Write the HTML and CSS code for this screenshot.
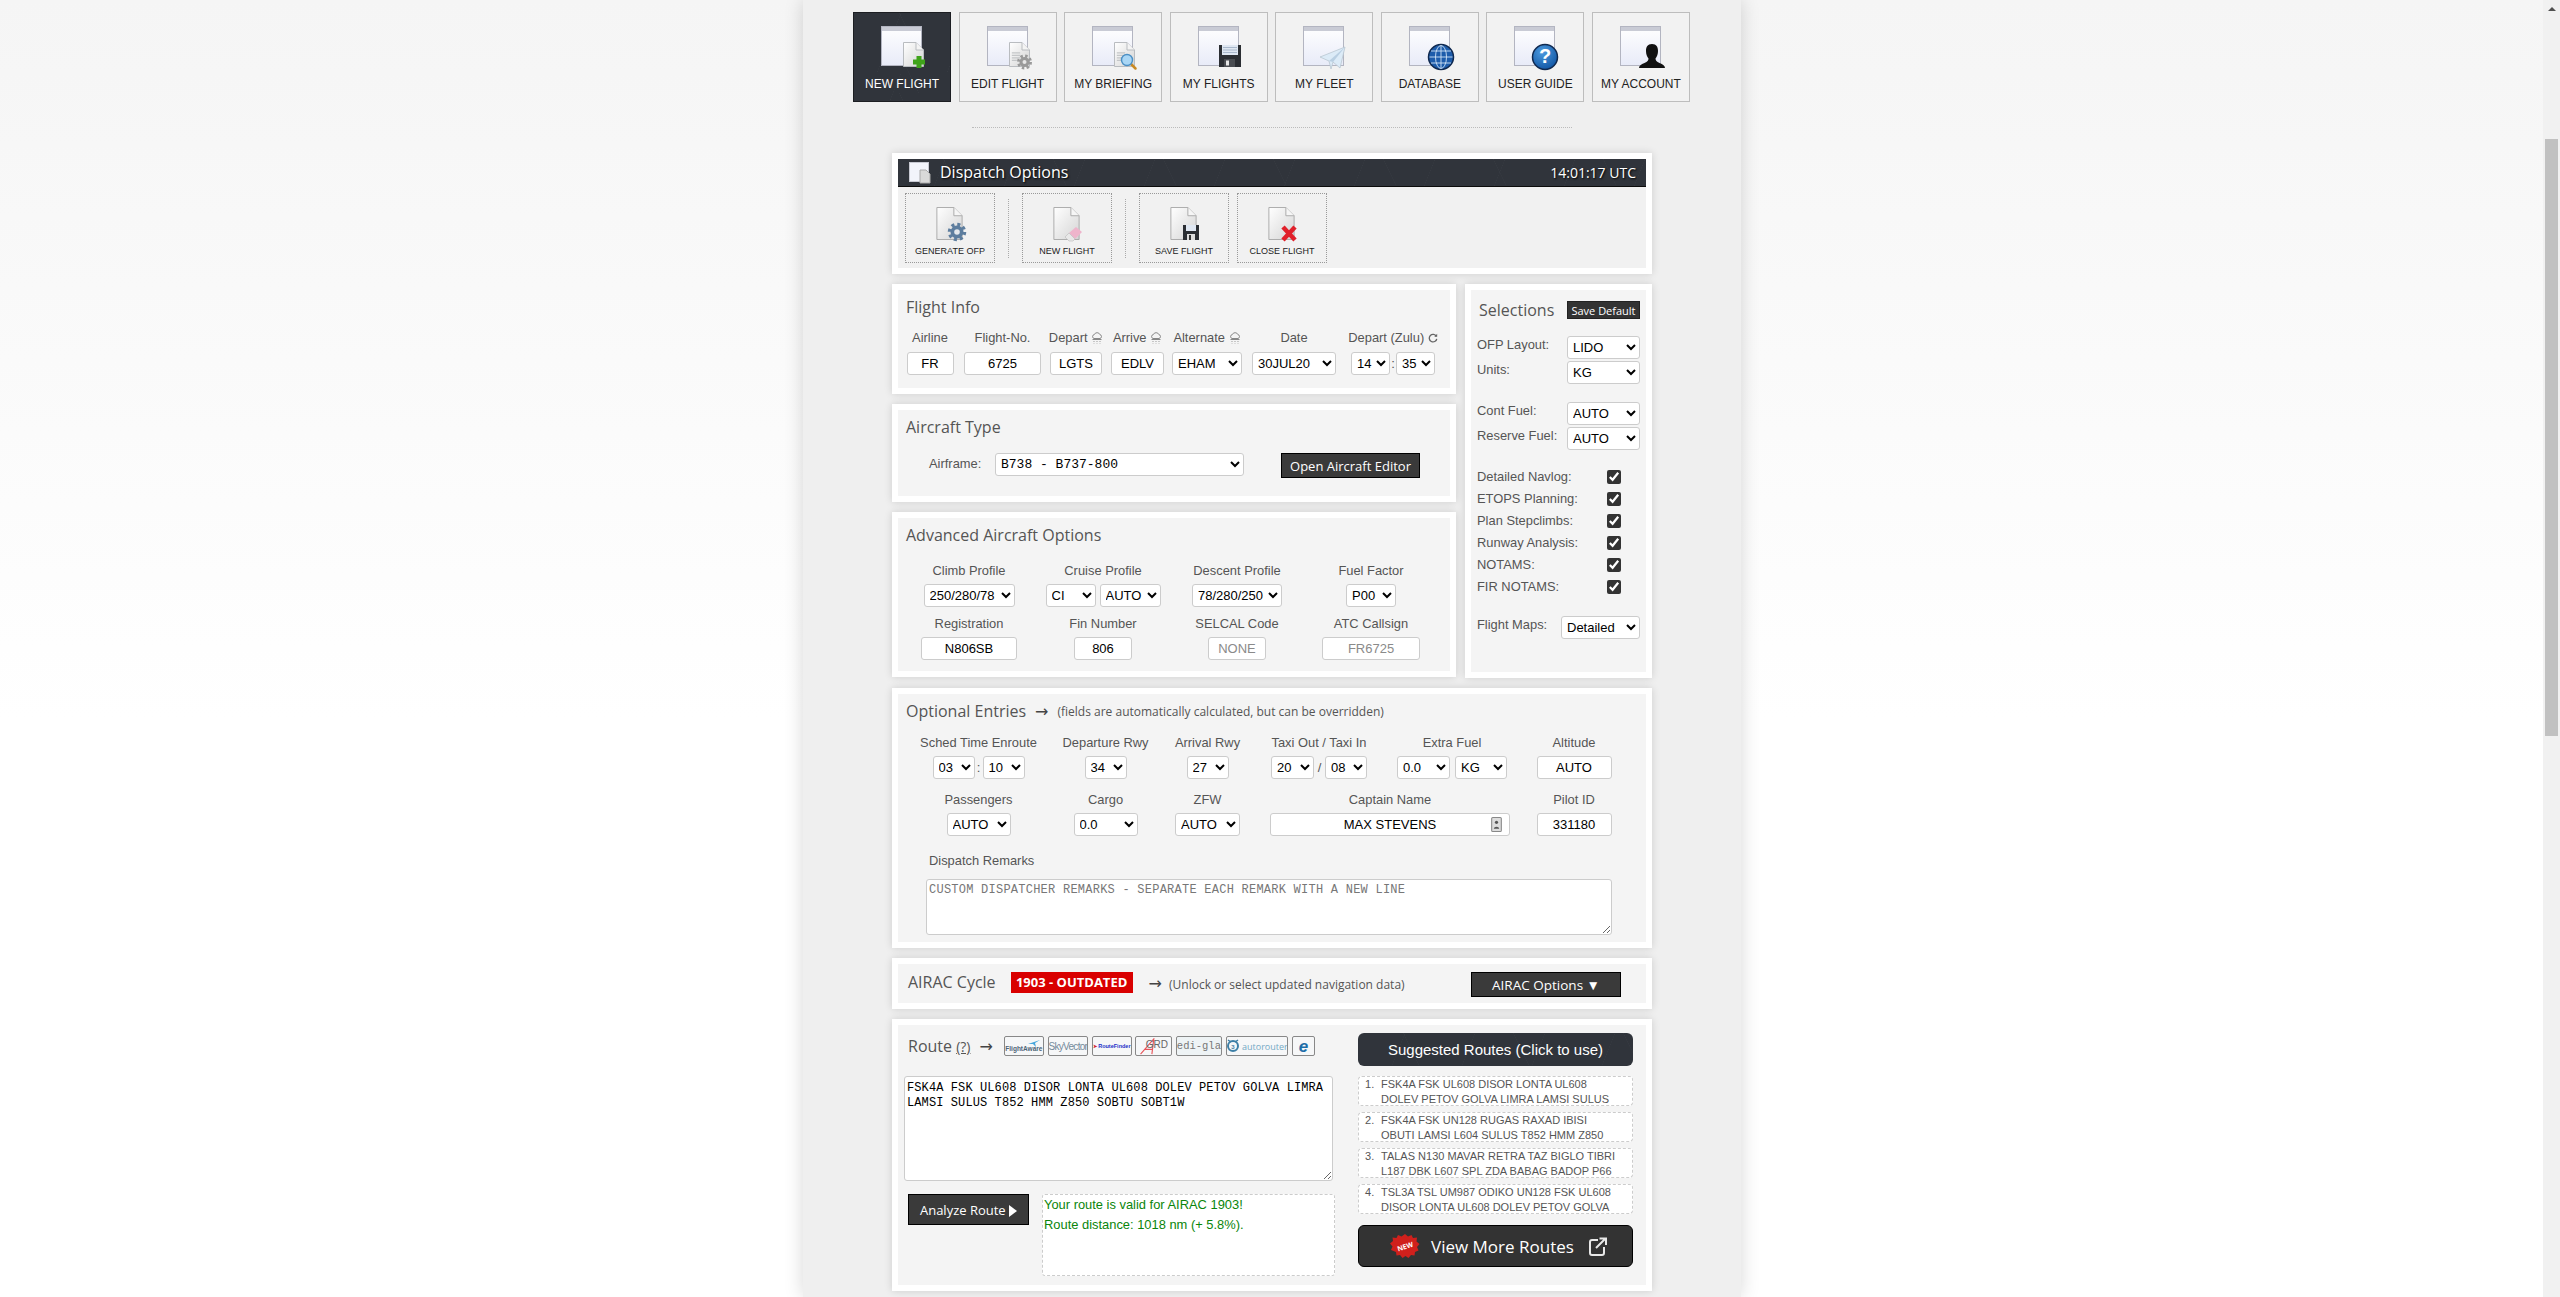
FILE: index.html
```html
<!DOCTYPE html>
<html lang="en">
<head>
<meta charset="utf-8">
<title>Dispatch Options</title>
<link rel="stylesheet" href="styles.css">
</head>
<body>
<svg class="defs" width="0" height="0">
  <defs>
    <linearGradient id="winfill" x1="0" y1="0" x2="0" y2="1"><stop offset="0" stop-color="#fff"/><stop offset="1" stop-color="#e8ebf8"/></linearGradient>
    <linearGradient id="docfill" x1="0" y1="0" x2="1" y2="1"><stop offset="0" stop-color="#fff"/><stop offset="1" stop-color="#d4d4d4"/></linearGradient>
    <radialGradient id="blue" cx=".4" cy=".3" r=".8"><stop offset="0" stop-color="#4d9be0"/><stop offset="1" stop-color="#0b4f9e"/></radialGradient>
    <symbol id="win" viewBox="0 0 41 40">
      <rect x=".5" y=".5" width="40" height="39" fill="url(#winfill)" stroke="#b3b5c1"/>
      <rect x="1" y="1" width="39" height="4" fill="#c9cbd5"/>
    </symbol>
    <symbol id="doc" viewBox="0 0 21 25">
      <path d="M.5.5H13L20.5 8V24.5H.5Z" fill="url(#docfill)" stroke="#b9bcc0"/>
      <path d="M13 .5V8H20.5" fill="#f4f4f4" stroke="#b9bcc0"/>
    </symbol>
    <symbol id="bigdoc" viewBox="0 0 27 34">
      <path d="M.5.5H18L26.5 9V33.5H.5Z" fill="url(#docfill)" stroke="#aaa"/>
      <path d="M18 .5V9H26.5" fill="#f6f6f6" stroke="#aaa"/>
    </symbol>
    <symbol id="lines" viewBox="0 0 12 14">
      <path d="M1 2H11M1 5H11M1 8H11M1 11H7" stroke="#c4c6c8" stroke-width="1.4"/>
    </symbol>
    <symbol id="floppy" viewBox="0 0 24 24">
      <path d="M1 1H23V23H1Z" fill="#2b2e33"/>
      <rect x="4" y="1" width="16" height="10" fill="#dfe7f2"/>
      <path d="M5 3.500H19M5 6H19M5 8.500H19" stroke="#a9b8cc"/>
      <rect x="6" y="15" width="11" height="8" fill="#4a4d52"/>
      <rect x="8" y="16.500" width="3" height="5" fill="#e6e6e6"/>
    </symbol>
    <symbol id="rain" viewBox="0 0 12 12">
      <path d="M3 6.500a2 2 0 0 1 .3-3.900 3 3 0 0 1 5.600 0A2 2 0 0 1 9 6.500Z" fill="none" stroke="#888"/>
      <path d="M1.500 7.500H10.500" stroke="#888"/>
      <path d="M3 9v2.500M6 9v2.500M9 9v2.500" stroke="#999" stroke-dasharray="1 1"/>
    </symbol>
  </defs>
</svg>

<div class="stage">
  <div class="column">
    <nav class="topnav">
      <a class="navbtn active">
        <svg class="navicon" viewBox="0 0 58 48"><use href="#win" x="8" y="2" width="41" height="40"/><use href="#doc" x="30" y="18" width="21" height="25"/><path d="M43.500 32h5v3.500h3.500v5h-3.500v3.500h-5v-3.500H40v-5h3.500z" fill="#3fa31a"/></svg>
        <span>NEW FLIGHT</span>
      </a>
      <a class="navbtn">
        <svg class="navicon" viewBox="0 0 58 48"><use href="#win" x="8" y="2" width="41" height="40"/><use href="#doc" x="30" y="18" width="21" height="25"/><use href="#lines" x="32" y="26" width="10" height="14"/><circle cx="45.500" cy="38" r="5" fill="#9a9a9a"/><circle cx="45.500" cy="38" r="6" fill="none" stroke="#9a9a9a" stroke-width="3" stroke-dasharray="2.400 2.300"/><circle cx="45.500" cy="38" r="2" fill="#e6e6e6"/></svg>
        <span>EDIT FLIGHT</span>
      </a>
      <a class="navbtn">
        <svg class="navicon" viewBox="0 0 58 48"><use href="#win" x="8" y="2" width="41" height="40"/><use href="#doc" x="30" y="18" width="21" height="25"/><use href="#lines" x="32" y="26" width="10" height="14"/><path d="M47 40l4.500 4.500" stroke="#c98a24" stroke-width="2.500" stroke-linecap="round"/><circle cx="43" cy="36" r="5.500" fill="#a9d6f5" stroke="#4b8fc4" stroke-width="1.400"/></svg>
        <span>MY BRIEFING</span>
      </a>
      <a class="navbtn">
        <svg class="navicon" viewBox="0 0 58 48"><use href="#win" x="8" y="2" width="41" height="40"/><use href="#floppy" x="28" y="20" width="24" height="24"/></svg>
        <span>MY FLIGHTS</span>
      </a>
      <a class="navbtn">
        <svg class="navicon" viewBox="0 0 58 48"><use href="#win" x="8" y="2" width="41" height="40"/><path d="M25 33L50 23 45 44 38 38 36 45 34 37Z" fill="#dcebf7" stroke="#b9c6d0" stroke-width=".8" stroke-linejoin="round"/><path d="M34 37L50 23 38 38" fill="#b9cfe2"/></svg>
        <span>MY FLEET</span>
      </a>
      <a class="navbtn">
        <svg class="navicon" viewBox="0 0 58 48"><use href="#win" x="8" y="2" width="41" height="40"/><circle cx="40" cy="33" r="12.500" fill="#1d5cab" stroke="#10294f" stroke-width="1.500"/><g fill="none" stroke="#cfe2f6" stroke-width=".9"><ellipse cx="40" cy="33" rx="5.500" ry="11.500"/><path d="M40 21.500V44.500M28.500 33H51.500M30 27H50M30 39H50"/></g></svg>
        <span>DATABASE</span>
      </a>
      <a class="navbtn">
        <svg class="navicon" viewBox="0 0 58 48"><use href="#win" x="8" y="2" width="41" height="40"/><circle cx="39" cy="33" r="12.500" fill="url(#blue)" stroke="#10294f" stroke-width="1.500"/><text class="qmark" x="39" y="39" text-anchor="middle">?</text></svg>
        <span>USER GUIDE</span>
      </a>
      <a class="navbtn">
        <svg class="navicon" viewBox="0 0 58 48"><use href="#win" x="8" y="2" width="41" height="40"/><path d="M40 20c4.500 0 6 3 6 7 0 3-1 5.500-2.500 7.500 0 2 1 3 4 4.500 3.500 1.500 5.500 2.500 5.500 5H27c0-2.500 2-3.500 5.500-5 3-1.500 4-2.500 4-4.500C35 32.500 34 30 34 27c0-4 1.500-7 6-7z" fill="#111"/></svg>
        <span>MY ACCOUNT</span>
      </a>
    </nav>

    <div class="divider"></div>

    <section class="panel">
      <header class="panelhead">
        <div class="headleft">
          <svg class="headicon" viewBox="0 0 22 22"><rect x=".5" y=".5" width="19" height="19" fill="#f2f4fb" stroke="#c7c9d2"/><path d="M11 8H17L21 12V21H11Z" fill="#d9d9d9" stroke="#aaa"/></svg>
          <span>Dispatch Options</span>
        </div>
        <span class="clock">14:01:17 UTC</span>
      </header>
      <div class="toolbar">
        <a class="toolbtn">
          <svg class="toolicon" viewBox="0 0 40 38"><use href="#bigdoc" x="6" y="2" width="27" height="33"/><circle cx="27" cy="27" r="6.500" fill="#5d7d9e"/><circle cx="27" cy="27" r="7.500" fill="none" stroke="#5d7d9e" stroke-width="3.500" stroke-dasharray="3 2.900"/><circle cx="27" cy="27" r="2.800" fill="#e4e8ec"/></svg>
          <span>GENERATE OFP</span>
        </a>
        <i class="toolsep"></i>
        <a class="toolbtn">
          <svg class="toolicon" viewBox="0 0 40 38"><use href="#bigdoc" x="6" y="2" width="27" height="33"/><path d="M22 28L29 22l6 5-7 7z" fill="#eeb4cb"/><path d="M18 32l4-4 6 6-2 2h-4z" fill="#e8e8e8" stroke="#bbb" stroke-width=".6"/></svg>
          <span>NEW FLIGHT</span>
        </a>
        <i class="toolsep"></i>
        <a class="toolbtn">
          <svg class="toolicon" viewBox="0 0 40 38"><use href="#bigdoc" x="6" y="2" width="27" height="33"/><path d="M19 20H35V35H19Z" fill="#2b2e33"/><rect x="22" y="20" width="10" height="6" fill="#dfe7f2"/><rect x="23" y="29" width="8" height="6" fill="#ddd"/><rect x="25" y="30" width="2" height="5" fill="#333"/></svg>
          <span>SAVE FLIGHT</span>
        </a>
        <a class="toolbtn tight">
          <svg class="toolicon" viewBox="0 0 40 38"><use href="#bigdoc" x="6" y="2" width="27" height="33"/><path d="M21 22L33 35M33 22L21 35" stroke="#e0202a" stroke-width="4.500"/></svg>
          <span>CLOSE FLIGHT</span>
        </a>
      </div>
    </section>

    <div class="split">
      <div class="leftstack">
        <section class="panel">
          <div class="inner flightinfo">
            <h2 class="ttl">Flight Info</h2>
            <div class="grid flightgrid">
              <div class="field"><label class="lbl">Airline</label><input class="ctl w47" value="FR"></div>
              <div class="field"><label class="lbl">Flight-No.</label><input class="ctl w77" value="6725"></div>
              <div class="field"><label class="lbl">Depart <svg class="wx"><use href="#rain"/></svg></label><input class="ctl w52" value="LGTS"></div>
              <div class="field"><label class="lbl">Arrive <svg class="wx"><use href="#rain"/></svg></label><input class="ctl w53" value="EDLV"></div>
              <div class="field"><label class="lbl">Alternate <svg class="wx"><use href="#rain"/></svg></label><select class="ctl w70"><option>EHAM</option></select></div>
              <div class="field"><label class="lbl">Date</label><select class="ctl w84"><option>30JUL20</option></select></div>
              <div class="field"><label class="lbl">Depart (Zulu) <svg class="wx reload" viewBox="0 0 12 12"><path d="M10 4a4.500 4.500 0 1 0 .5 3" fill="none" stroke="#666" stroke-width="1.600"/><path d="M7.500 4.500H11V1z" fill="#666"/></svg></label>
                <div class="pair"><select class="ctl w39"><option>14</option></select><span class="sep sep6">:</span><select class="ctl w39"><option>35</option></select></div></div>
            </div>
          </div>
        </section>

        <section class="panel">
          <div class="inner aircraft">
            <h2 class="ttl">Aircraft Type</h2>
            <div class="airframe">
              <label class="lbl inlinelbl">Airframe:</label>
              <select class="ctl mono w249"><option>B738 - B737-800</option></select>
              <button class="darkbtn editor">Open Aircraft Editor</button>
            </div>
          </div>
        </section>

        <section class="panel">
          <div class="inner advanced">
            <h2 class="ttl">Advanced Aircraft Options</h2>
            <div class="grid advgrid">
              <div class="field"><label class="lbl">Climb Profile</label><select class="ctl w91"><option>250/280/78</option></select></div>
              <div class="field"><label class="lbl">Cruise Profile</label><div class="pair gap4"><select class="ctl w50"><option>CI</option></select><select class="ctl w61"><option>AUTO</option></select></div></div>
              <div class="field"><label class="lbl">Descent Profile</label><select class="ctl w90"><option>78/280/250</option></select></div>
              <div class="field"><label class="lbl">Fuel Factor</label><select class="ctl w50"><option>P00</option></select></div>
            </div>
            <div class="grid advgrid rowgap">
              <div class="field"><label class="lbl">Registration</label><input class="ctl w96" value="N806SB"></div>
              <div class="field"><label class="lbl">Fin Number</label><input class="ctl w58" value="806"></div>
              <div class="field"><label class="lbl">SELCAL Code</label><input class="ctl w58" placeholder="NONE"></div>
              <div class="field"><label class="lbl">ATC Callsign</label><input class="ctl w98" placeholder="FR6725"></div>
            </div>
          </div>
        </section>
      </div>

      <section class="panel selections">
        <div class="inner selinner">
          <div class="selhead"><h2 class="ttl">Selections</h2><button class="savebtn">Save Default</button></div>
          <div class="selgroup">
            <div class="selrow"><label class="lbl">OFP Layout:</label><select class="ctl w73"><option>LIDO</option></select></div>
            <div class="selrow"><label class="lbl">Units:</label><select class="ctl w73"><option>KG</option></select></div>
          </div>
          <div class="selgroup">
            <div class="selrow"><label class="lbl">Cont Fuel:</label><select class="ctl w73"><option>AUTO</option></select></div>
            <div class="selrow"><label class="lbl">Reserve Fuel:</label><select class="ctl w73"><option>AUTO</option></select></div>
          </div>
          <div class="checks">
            <label class="chk"><span class="lbl">Detailed Navlog:</span><input type="checkbox" checked></label>
            <label class="chk"><span class="lbl">ETOPS Planning:</span><input type="checkbox" checked></label>
            <label class="chk"><span class="lbl">Plan Stepclimbs:</span><input type="checkbox" checked></label>
            <label class="chk"><span class="lbl">Runway Analysis:</span><input type="checkbox" checked></label>
            <label class="chk"><span class="lbl">NOTAMS:</span><input type="checkbox" checked></label>
            <label class="chk"><span class="lbl">FIR NOTAMS:</span><input type="checkbox" checked></label>
          </div>
          <div class="selgroup">
            <div class="selrow"><label class="lbl">Flight Maps:</label><select class="ctl w79"><option>Detailed</option></select></div>
          </div>
        </div>
      </section>
    </div>

    <section class="panel">
      <div class="inner optional">
        <div class="titlerow">
          <h2 class="ttl">Optional Entries</h2>
          <span class="arrow">→</span>
          <span class="note">(fields are automatically calculated, but can be overridden)</span>
        </div>
        <div class="grid optgrid1">
          <div class="field"><label class="lbl">Sched Time Enroute</label><div class="pair"><select class="ctl w42"><option>03</option></select><span class="sep">:</span><select class="ctl w42"><option>10</option></select></div></div>
          <div class="field"><label class="lbl">Departure Rwy</label><select class="ctl w42"><option>34</option></select></div>
          <div class="field"><label class="lbl">Arrival Rwy</label><select class="ctl w42"><option>27</option></select></div>
          <div class="field"><label class="lbl">Taxi Out / Taxi In</label><div class="pair"><select class="ctl w43"><option>20</option></select><span class="sep sep11">/</span><select class="ctl w42"><option>08</option></select></div></div>
          <div class="field"><label class="lbl">Extra Fuel</label><div class="pair gap5"><select class="ctl w53"><option>0.0</option></select><select class="ctl w52"><option>KG</option></select></div></div>
          <div class="field"><label class="lbl">Altitude</label><input class="ctl w75" value="AUTO"></div>
        </div>
        <div class="grid optgrid2">
          <div class="field"><label class="lbl">Passengers</label><select class="ctl w64"><option>AUTO</option></select></div>
          <div class="field"><label class="lbl">Cargo</label><select class="ctl w64"><option>0.0</option></select></div>
          <div class="field"><label class="lbl">ZFW</label><select class="ctl w65"><option>AUTO</option></select></div>
          <div class="field"><label class="lbl">Captain Name</label>
            <div class="captain"><input class="ctl w240" value="MAX STEVENS">
              <svg class="contact" viewBox="0 0 10 14"><rect x=".5" y=".5" width="9" height="13" rx="1" fill="#ddd" stroke="#888"/><circle cx="5" cy="5" r="1.500" fill="#555"/><path d="M2.500 11c0-2.500 5-2.500 5 0z" fill="#555"/></svg>
            </div></div>
          <div class="field"><label class="lbl">Pilot ID</label><input class="ctl w75" value="331180"></div>
        </div>
        <label class="lbl remarkslbl">Dispatch Remarks</label>
        <textarea class="remarks mono" placeholder="CUSTOM DISPATCHER REMARKS - SEPARATE EACH REMARK WITH A NEW LINE"></textarea>
      </div>
    </section>

    <section class="panel">
      <div class="inner airac">
        <h2 class="ttl">AIRAC Cycle</h2>
        <span class="badge">1903 - OUTDATED</span>
        <span class="arrow airacarrow">→</span>
        <span class="note airacnote">(Unlock or select updated navigation data)</span>
        <button class="darkbtn airacbtn">AIRAC Options ▼</button>
      </div>
    </section>

    <section class="panel">
      <div class="inner route">
        <div class="routeleft">
          <div class="routehead">
            <h2 class="ttl">Route <span class="help">(?)</span></h2>
            <span class="arrow">→</span>
            <div class="logos">
              <a class="logo l40 fa">FlightAware<svg class="faplane" viewBox="0 0 12 8"><path d="M0 5L12 1 7 4 8 8 5 5Z" fill="#45a5dc"/></svg></a>
              <a class="logo l40 sv">SkyVector</a>
              <a class="logo l40 rf"><i class="rfarrow">➤</i>RouteFinder</a>
              <a class="logo l37 grd"><svg class="grdmark" viewBox="0 0 22 18"><path d="M1 17L15 1 13 17M5 12H14" fill="none" stroke="#e8555a" stroke-width="1.200"/></svg><span>GRD</span></a>
              <a class="logo l46 edi">edi-gla</a>
              <a class="logo l62 auto"><svg class="autoicon" viewBox="0 0 14 14"><circle cx="7" cy="7" r="5" fill="none" stroke="#3d7fa6" stroke-width="2"/><path d="M2 1l3 2M12 1L9 3" stroke="#3d7fa6" stroke-width="1.500"/><text class="autonum" x="7" y="9.500" text-anchor="middle">3</text></svg>autorouter</a>
              <a class="logo l23 euro">e</a>
            </div>
          </div>
          <textarea class="routebox mono">FSK4A FSK UL608 DISOR LONTA UL608 DOLEV PETOV GOLVA LIMRA LAMSI SULUS T852 HMM Z850 SOBTU SOBT1W</textarea>
          <div class="analyze">
            <button class="darkbtn analyzebtn">Analyze Route <span class="tri"></span></button>
            <div class="result">Your route is valid for AIRAC 1903!<br>Route distance: 1018 nm (+ 5.8%).</div>
          </div>
        </div>
        <div class="routeright">
          <div class="sughead">Suggested Routes (Click to use)</div>
          <ol class="suglist">
            <li>FSK4A FSK UL608 DISOR LONTA UL608 DOLEV PETOV GOLVA LIMRA LAMSI SULUS</li>
            <li>FSK4A FSK UN128 RUGAS RAXAD IBISI OBUTI LAMSI L604 SULUS T852 HMM Z850</li>
            <li>TALAS N130 MAVAR RETRA TAZ BIGLO TIBRI L187 DBK L607 SPL ZDA BABAG BADOP P66</li>
            <li>TSL3A TSL UM987 ODIKO UN128 FSK UL608 DISOR LONTA UL608 DOLEV PETOV GOLVA</li>
          </ol>
          <a class="viewmore">
            <svg class="newbadge" viewBox="0 0 30 26"><path d="M15 1l3 2.500 3.500-1.500 1.500 3 4-.5-.5 4 3 2.500-2.500 3 1.500 3.500-3.500 1.500-.5 3.500-3.500-.5-2.500 3-3-2-3 2-2.500-3-3.500.5-.5-3.500L1 17l1.500-3.500L0 10.500l3-2.500-.5-3.500 4 .5 1.500-3L11.500 3.500z" fill="#d0201c"/><text class="newtxt" x="15" y="16" text-anchor="middle" transform="rotate(-18 15 13)">NEW</text></svg>
            <span>View More Routes</span>
            <svg class="exticon" viewBox="0 0 18 19"><path d="M9 3H3a2 2 0 0 0-2 2v11a2 2 0 0 0 2 2h10a2 2 0 0 0 2-2v-6" fill="none" stroke="#e8e8e8" stroke-width="2"/><path d="M7 11L16 2M10.500 1.500H17V8" fill="none" stroke="#e8e8e8" stroke-width="2"/></svg>
          </a>
        </div>
      </div>
    </section>
  </div>
</div>

<div class="scrollbar"><div class="thumb"></div></div>
</body>
</html>
```

FILE: styles.css
```css
* { box-sizing: border-box; }
html, body { margin: 0; height: 100%; overflow: hidden; }
body {
  display: flex;
  background: linear-gradient(#f5f5f5 0, #ffffff 720px);
  font-family: "Liberation Sans", Arial, sans-serif;
  font-size: 13px;
  color: #444;
}
.defs { position: absolute; }
.stage { flex: 1; min-width: 0; height: 1297px; padding-left: 1px; overflow: hidden; }
.column {
  width: 938px;
  height: 1297px;
  margin: 0 auto;
  padding-top: 12px;
  background: #efefef;
  box-shadow: 0 0 18px rgba(0, 0, 0, .16);
}

/* scrollbar */
.scrollbar { position: relative; width: 17px; height: 1297px; background: #f1f1f1; padding: 139px 2px 0; }
.scrollbar::before {
  content: "";
  position: absolute;
  left: 5px;
  top: 7px;
  border-left: 4px solid transparent;
  border-right: 4px solid transparent;
  border-bottom: 4px solid #505050;
}
.thumb { width: 13px; height: 597px; background: #c1c1c1; }

/* top nav */
.topnav { display: flex; gap: 7.57px; padding-left: 50px; }
.navbtn {
  width: 98px;
  height: 90px;
  padding-top: 11px;
  border: 1px solid #bdbdbd;
  background: #f2f2f2;
  text-align: center;
  font-size: 12px;
  line-height: 14px;
  color: #222;
}
.navbtn span { display: block; margin-top: 5px; }
.navbtn.active, .panelhead, .sughead {
  background-color: #30343b;
  background-image:
    linear-gradient(112deg, transparent 49.6%, rgba(255, 255, 255, .035) 50%, transparent 50.4%),
    linear-gradient(64deg, transparent 49.6%, rgba(255, 255, 255, .03) 50%, transparent 50.4%);
  background-size: 70px 60px, 110px 40px;
}
.navbtn.active { border-color: #1c1e22; color: #fff; }
.navicon { display: block; width: 58px; height: 48px; margin: 0 auto; }
.qmark { font: bold 20px "Liberation Sans", sans-serif; fill: #fff; }

.divider { width: 600px; margin: 25px auto 25px; border-top: 1px dotted #bbb; }

/* panels */
.panel {
  width: 760px;
  margin: 0 auto 10px;
  border: 6px solid #fff;
  background: #f4f4f4;
  box-shadow: 0 0 8px rgba(0, 0, 0, .14);
}
.panelhead {
  display: flex;
  align-items: center;
  justify-content: space-between;
  height: 28px;
  padding: 0 10px 0 11px;
  border-bottom: 1px solid #0c0c0c;
  color: #fff;
}
.headleft { display: flex; align-items: center; gap: 9px; font: 16px "Open Sans", sans-serif; text-shadow: 1px 1px 2px #000; }
.headleft span { position: relative; top: -1px; }
.headicon { width: 22px; height: 22px; }
.clock { font: 14px "Open Sans", sans-serif; text-shadow: 1px 1px 2px #000; }
.toolbar { display: flex; align-items: flex-start; height: 81px; padding: 6px 0 0 7px; background: #f1f1f1; }
.toolbtn {
  display: block;
  width: 90px;
  height: 70px;
  padding-top: 11px;
  border: 1px dotted #999;
  text-align: center;
  font-size: 9px;
  line-height: 12px;
  color: #222;
}
.toolbtn span { display: block; margin-top: 2px; }
.toolbtn.tight { margin-left: 8px; }
.toolicon { display: block; width: 40px; height: 38px; margin: 0 auto; }
.toolsep { width: 1px; height: 59px; margin: 6px 13px 0 13px; border-left: 1px dotted #aaa; }

.split { display: flex; justify-content: space-between; width: 760px; margin: 0 auto 10px; }
.leftstack { width: 564px; }
.leftstack .panel { width: 564px; }
.leftstack .panel:last-child { margin-bottom: 0; }
.selections { width: 187px; height: 394px; margin: 0; }

.ttl { margin: 0; font: 400 16px/22px "Open Sans", sans-serif; color: #555; }
.lbl { display: block; font-size: 12.9px; line-height: 14px; color: #555; white-space: nowrap; }
.ctl {
  height: 23px;
  padding: 0;
  border: 1px solid #ccc;
  border-radius: 3px;
  background: #fff;
  font: 13px "Liberation Sans", sans-serif;
  color: #000;
  text-align: center;
}
select.ctl { text-align: left; padding-left: 1px; }
.ctl::placeholder { color: #8a8a8a; opacity: 1; }
.mono { font-family: "Liberation Mono", monospace; }

.w39 { width: 39px; } .w42 { width: 42px; } .w43 { width: 43px; } .w47 { width: 47px; }
.w50 { width: 50px; } .w52 { width: 52px; } .w53 { width: 53px; } .w58 { width: 58px; }
.w61 { width: 61px; } .w64 { width: 64px; } .w65 { width: 65px; } .w70 { width: 70px; }
.w73 { width: 73px; } .w75 { width: 75px; } .w77 { width: 77px; } .w79 { width: 79px; }
.w84 { width: 84px; } .w90 { width: 90px; } .w91 { width: 91px; } .w96 { width: 96px; }
.w98 { width: 98px; } .w240 { width: 240px; } .w249 { width: 249px; }

.grid { display: grid; }
.field { display: flex; flex-direction: column; align-items: center; }
.field .lbl { margin-bottom: 6px; }
.pair { display: flex; align-items: center; }
.pair .sep { width: 8px; text-align: center; color: #555; }
.pair .sep6 { width: 6px; }
.pair .sep11 { width: 11px; }
.gap4 { gap: 4px; }
.gap5 { gap: 5px; }
.wx { display: inline-block; width: 12px; height: 12px; vertical-align: -2px; }
.reload { width: 10px; height: 10px; vertical-align: -1px; }

.inner { background: #f4f4f4; }
.flightinfo { height: 98px; padding: 6px 0 0 8px; }
.flightgrid { grid-template-columns: 60px 85px 62px 61px 78px 96px 102px; margin: 13px 0 0 -6px; }
.flightgrid .lbl { margin-bottom: 7px; }
.aircraft { height: 86px; padding: 6px 0 0 8px; }
.airframe { display: flex; align-items: flex-start; margin-top: 15px; }
.airframe .inlinelbl { width: 89px; padding: 4px 0 0 23px; }
.airframe .mono { font-size: 13px; }
.darkbtn {
  border: 1px solid #000;
  background: #3a3a3a;
  color: #fff;
  font: 13px "Open Sans", sans-serif;
  padding: 0;
}
.editor { width: 139px; height: 25px; margin-left: 37px; }
.advanced { height: 153px; padding: 6px 0 0 8px; }
.advgrid { grid-template-columns: repeat(4, 134px); margin: 18px 0 0 -4px; }
.advgrid.rowgap { margin-top: 10px; }

.selinner { height: 382px; padding: 11px 6px 0 6px; }
.selhead { display: flex; align-items: center; justify-content: space-between; height: 18px; padding-left: 2px; }
.savebtn {
  width: 73px;
  height: 18px;
  padding: 0;
  border: 1px solid #222;
  background: #333;
  color: #fff;
  font: 11px "Open Sans", sans-serif;
}
.selgroup { margin-top: 17px; }
.selgroup + .selgroup { margin-top: 18px; }
.selrow { display: flex; justify-content: space-between; height: 23px; margin-bottom: 2px; }
.selrow .lbl { line-height: 18px; }
.checks { margin-top: 16px; }
.chk { display: flex; align-items: center; height: 22px; }
.chk .lbl { width: 130px; }
.chk input { width: 14px; height: 14px; margin: 0; accent-color: #333; }
.checks + .selgroup { margin-top: 18px; }

.optional { height: 248px; padding: 6px 0 0 8px; }
.titlerow { display: flex; align-items: center; height: 22px; }
.arrow { font: 16px "Open Sans", "DejaVu Sans", sans-serif; color: #444; }
.titlerow .arrow { margin: 0 9px 0 9px; }
.note { font: 12px "Open Sans", sans-serif; color: #555; }
.optgrid1 { grid-template-columns: 145px 109px 95px 128px 138px 106px; margin-top: 14px; }
.optgrid2 { grid-template-columns: 145px 109px 95px 270px 98px; margin-top: 14px; }
.captain { position: relative; }
.captain .ctl { display: block; }
.contact { position: absolute; right: 8px; top: 4px; width: 11px; height: 15px; }
.remarkslbl { margin: 18px 0 0 23px; }
.remarks {
  display: block;
  width: 686px;
  height: 56px;
  margin: 11px 0 0 20px;
  padding: 3px 2px;
  border: 1px solid #ccc;
  border-radius: 3px;
  background: #fff;
  font-size: 12px;
  letter-spacing: .24px;
}
.remarks::placeholder { color: #777; opacity: 1; }

.airac { display: flex; align-items: flex-start; height: 39px; padding: 7px 25px 0 10px; }
.badge {
  width: 122px;
  height: 21px;
  margin: 1px 0 0 15px;
  background: #d90000;
  color: #fff;
  font: bold 13px/21px "Open Sans", sans-serif;
  text-align: center;
}
.airacarrow { margin: 2px 7px 0 16px; line-height: 21px; }
.airacnote { margin-top: 5px; }
.airacbtn { width: 150px; height: 25px; margin: 1px 0 0 auto; font-size: 13.5px; }

.route { display: flex; height: 260px; }
.routeleft { width: 460px; padding: 11px 0 0 10px; }
.routehead { display: flex; align-items: center; height: 20px; }
.help { font-size: 14px; text-decoration: underline; }
.routehead .arrow { margin: 0 11px 0 9px; }
.logos { display: flex; gap: 4px; }
.logo {
  position: relative;
  display: flex;
  align-items: center;
  justify-content: center;
  height: 20px;
  border: 1px solid #888;
  border-radius: 2px;
  background: #f6f7f8;
  overflow: hidden;
  white-space: nowrap;
}
.l40 { width: 40px; } .l37 { width: 37px; margin-left: -1px; } .l46 { width: 46px; } .l62 { width: 62px; } .l23 { width: 23px; }
.fa { padding-top: 4px; font: bold 6.5px "Liberation Sans", sans-serif; color: #4d6477; }
.faplane { position: absolute; right: 3px; top: 2px; width: 12px; height: 8px; }
.sv { font: 10px "Liberation Sans", sans-serif; letter-spacing: -.7px; color: #74899a; }
.rf { font: bold 5.5px "Liberation Sans", sans-serif; color: #2230c8; }
.rfarrow { margin-right: 1px; font-style: normal; color: #d02030; font-size: 5px; }
.grd { justify-content: flex-end; padding-right: 3px; font: 10px "Liberation Sans", sans-serif; color: #666; }
.grd span { position: relative; top: -2px; }
.grdmark { position: absolute; left: 3px; top: 1px; width: 22px; height: 17px; }
.edi { font: 10.5px "Liberation Mono", monospace; color: #777; background: #eef3f5; }
.auto { gap: 2px; font: 9px "Open Sans", sans-serif; color: #74a9c5; }
.autoicon { width: 14px; height: 14px; flex: none; }
.autonum { font: bold 6px "Liberation Sans", sans-serif; fill: #3d7fa6; }
.euro { font: italic bold 17px/17px "Liberation Sans", sans-serif; color: #1f6ea8; }
.routebox {
  display: block;
  width: 429px;
  height: 105px;
  margin: 20px 0 0 -4px;
  padding: 4px 2px;
  border: 1px solid #ccc;
  border-radius: 3px;
  background: #fff;
  font-size: 12px;
  line-height: 15px;
  letter-spacing: .1px;
  color: #000;
}
.analyze { display: flex; gap: 13px; margin-top: 13px; }
.analyzebtn { width: 121px; height: 31px; }
.tri { display: inline-block; border-left: 8px solid #fff; border-top: 6px solid transparent; border-bottom: 6px solid transparent; vertical-align: -2px; }
.result {
  width: 293px;
  height: 82px;
  padding: 0 1px;
  border: 1px dashed #ccc;
  border-radius: 3px;
  background: #fff;
  color: #0a850a;
  font-size: 12.900px;
  line-height: 20px;
}
.routeright { width: 275px; padding-top: 8px; }
.sughead {
  height: 33px;
  border-radius: 6px;
  color: #fff;
  font-size: 15px;
  line-height: 33px;
  text-align: center;
}
.suglist { list-style: none; counter-reset: s; margin: 10px 0 0; padding: 0; }
.suglist li {
  position: relative;
  counter-increment: s;
  height: 30px;
  margin-bottom: 6px;
  padding: 0 10px 0 22px;
  border: 1px dashed #ccc;
  border-radius: 4px;
  background: #fff;
  font-size: 11px;
  line-height: 15px;
  color: #555;
  overflow: hidden;
}
.suglist li::before { content: counter(s) "."; position: absolute; left: 6px; top: 0; }
.viewmore {
  display: flex;
  align-items: center;
  height: 42px;
  margin-top: 11px;
  padding-left: 31px;
  border: 1px solid #000;
  border-radius: 6px;
  background: #333;
  color: #fff;
  font: 17px "Open Sans", sans-serif;
}
.newbadge { width: 30px; height: 26px; margin-right: 11px; }
.newtxt { font: bold 7px "Open Sans", sans-serif; fill: #fff; }
.exticon { width: 18px; height: 19px; margin-left: 15px; }
```
